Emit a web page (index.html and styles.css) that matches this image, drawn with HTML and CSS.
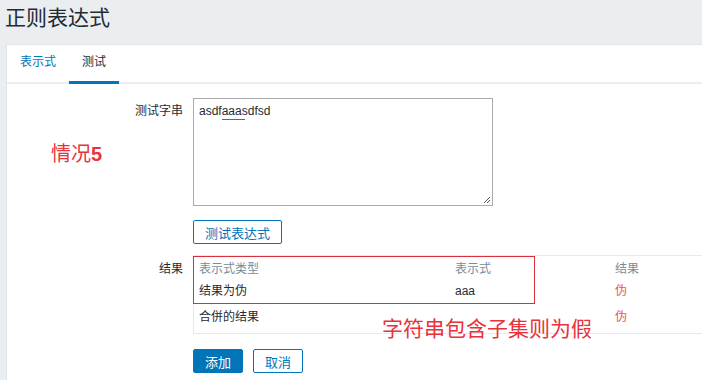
FILE: index.html
```html
<!DOCTYPE html>
<html lang="zh-CN">
<head>
  <meta charset="UTF-8">
  <title>正则表达式</title>
  <link rel="stylesheet" href="styles.css">
</head>
<body>

  <header class="page-header">
    <h1>正则表达式</h1>
  </header>

  <div class="panel">
    <nav class="tabs">
      <a href="#" class="tab">表示式</a>
      <a href="#" class="tab tab-active">测试</a>
    </nav>

    <div class="form">
      <label class="form-label">测试字串</label>
      <div class="form-field">
        <div class="textarea">asdf<span class="hl">aaa</span>sdfsd
          <svg class="grip" width="10" height="10" viewBox="0 0 10 10">
            <path d="M9 3 L3 9 M9 6 L6 9" stroke="#555" stroke-width="1" fill="none"/>
          </svg>
        </div>
      </div>

      <div class="form-label"></div>
      <div class="form-field">
        <button class="btn-alt">测试表达式</button>
      </div>

      <label class="form-label form-label-result">结果</label>
      <div class="form-field">
        <div class="result-table">
          <div class="row row-head">
            <span>表示式类型</span>
            <span>表示式</span>
            <span>结果</span>
          </div>
          <div class="row row-first">
            <span>结果为伪</span>
            <span>aaa</span>
            <span class="red">伪</span>
          </div>
          <div class="row row-last">
            <span>合併的结果</span>
            <span></span>
            <span class="red">伪</span>
          </div>
        </div>
      </div>

      <div class="form-label"></div>
      <div class="form-field buttons">
        <button class="btn">添加</button>
        <button class="btn-alt">取消</button>
      </div>
    </div>

    <!-- annotations -->
    <div class="note note-case">情况<b>5</b></div>
    <div class="note-box"></div>
    <div class="note note-text">字符串包含子集则为假</div>
  </div>

</body>
</html>
```

FILE: styles.css
```css
body {
  margin: 0;
  background-color: #ebeef0;
  font-family: "Liberation Sans", "Noto Sans CJK SC", sans-serif;
  font-size: 12px;
  color: #1f2c33;
  overflow: hidden;
}

.page-header {
  height: 44px;
  padding-left: 5px;
}

.page-header h1 {
  margin: 0;
  font-size: 21px;
  font-weight: normal;
  line-height: 35px;
  color: #1f2c33;
}

.panel {
  position: relative;
  margin-left: 6px;
  min-height: 340px;
  background: white;
  border-left: 1px solid #dde3e6;
  border-top: 1px solid #e3e7ea;
  overflow: hidden;
}

.tabs {
  display: flex;
  border-bottom: 2px solid #ebeef0;
}

.tab {
  display: block;
  padding: 0 13px;
  height: 36px;
  line-height: 35px;
  color: #0275b8;
  text-decoration: none;
  margin-bottom: -2px;
  border-bottom: 3px solid transparent;
}

.tab-active {
  color: #1f2c33;
  border-bottom-color: #0275b8;
}

.form {
  display: grid;
  grid-template-columns: 176px 1fr;
  column-gap: 10px;
  padding-top: 14px;
}

.form-label {
  text-align: right;
  padding-top: 5px;
  line-height: 16px;
}

.form-label-result {
  padding-top: 17px;
}

.textarea {
  position: relative;
  box-sizing: border-box;
  width: 300px;
  height: 108px;
  border: 1px solid #acacac;
  padding: 4px 5px;
  line-height: 16px;
  font-size: 12px;
  color: #1f2c33;
}

.hl {
  display: inline-block;
  line-height: 15px;
  border-bottom: 1px solid #e0303a;
  padding-right: 3px;
  margin-right: -3px;
}

.grip {
  position: absolute;
  right: 1px;
  bottom: 1px;
}

.form-field .btn-alt {
  margin-top: 14px;
}

button {
  font-family: "Liberation Sans", "Noto Sans CJK SC", sans-serif;
  font-size: 13px;
  height: 24px;
  border-radius: 2px;
  cursor: pointer;
}

.btn-alt {
  background: white;
  color: #0275b8;
  border: 1px solid #0275b8;
  padding: 0 11px;
}

.btn {
  background: #0275b8;
  color: white;
  border: 1px solid #0275b8;
  padding: 0 11px;
}

.result-table {
  margin-top: 11px;
  width: 620px;
  border: 1px solid #e6eaec;
}

.row {
  display: grid;
  grid-template-columns: 256px 160px 1fr;
  line-height: 16px;
}

.row span {
  padding-left: 5px;
}

.row-head {
  padding: 5px 0 3px;
  color: #768d99;
}

.row-first {
  padding: 3px 0 2px;
}

.row-last {
  padding: 8px 0 8px;
}

.red {
  color: #e45959;
}

.buttons {
  display: flex;
  gap: 10px;
  padding-top: 15px;
}

.buttons .btn-alt {
  margin-top: 0;
}

.note {
  position: absolute;
  color: #e8323c;
  line-height: 28px;
  font-family: "Noto Sans CJK SC", sans-serif;
}

.note b {
  font-family: "Liberation Sans", sans-serif;
  font-weight: bold;
}

.note-case {
  left: 44px;
  top: 94px;
  font-size: 20px;
}

.note-text {
  left: 375px;
  top: 268px;
  font-size: 21px;
}

.note-box {
  position: absolute;
  left: 186px;
  top: 211px;
  width: 340px;
  height: 46px;
  border: 1px solid #d9303b;
}
```
